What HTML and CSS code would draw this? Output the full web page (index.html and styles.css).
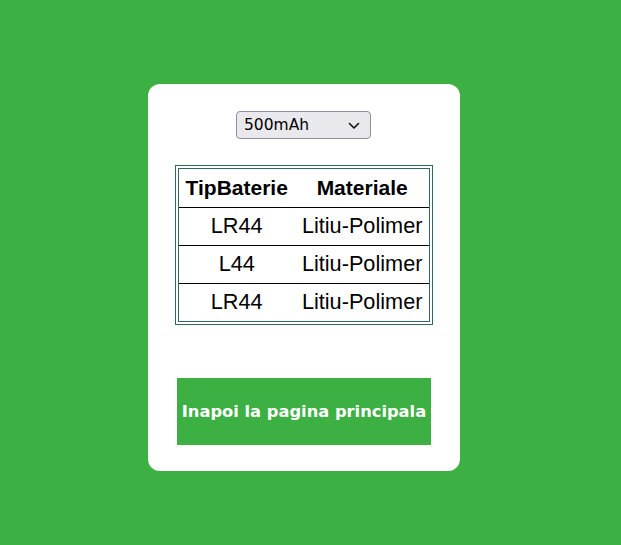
FILE: index.html
```html
<!DOCTYPE html>
<html lang="ro">
<head>
<meta charset="utf-8">
<title>Baterii</title>
<link rel="stylesheet" href="styles.css">
</head>
<body>
<div class="page">
  <div class="card">
    <div class="select-wrap">
      <select class="capacity">
        <option>500mAh</option>
        <option>1000mAh</option>
        <option>2000mAh</option>
      </select>
      <svg class="chevron" width="12" height="8" viewBox="0 0 12 8"><path d="M1.5 1.5 L6 6 L10.5 1.5" fill="none" stroke="#111" stroke-width="1.6" stroke-linecap="round" stroke-linejoin="round"/></svg>
    </div>
    <table class="batteries">
      <thead>
        <tr><th>TipBaterie</th><th>Materiale</th></tr>
      </thead>
      <tbody>
        <tr><td>LR44</td><td>Litiu-Polimer</td></tr>
        <tr><td>L44</td><td>Litiu-Polimer</td></tr>
        <tr><td>LR44</td><td>Litiu-Polimer</td></tr>
      </tbody>
    </table>
    <a class="back" href="#">Inapoi la pagina principala</a>
  </div>
</div>
</body>
</html>
```

FILE: styles.css
```css
html, body {
  margin: 0;
  padding: 0;
}
body {
  background: #3cb043;
  min-height: 545px;
}
.page {
  display: flex;
  justify-content: flex-start;
  padding: 84px 0 0 148px;
}
.card {
  box-sizing: border-box;
  width: 312px;
  height: 387px;
  background: #ffffff;
  border-radius: 12px;
  padding: 27px 0 0;
  display: flex;
  flex-direction: column;
  align-items: center;
}
.select-wrap {
  position: relative;
  width: 135px;
  height: 28px;
  margin-left: -1px;
}
.capacity {
  appearance: none;
  -webkit-appearance: none;
  box-sizing: border-box;
  width: 135px;
  height: 28px;
  margin: 0;
  padding: 0 0 0 7px;
  border: 1px solid #8f8f9d;
  border-radius: 4px;
  background: #e9e9ed;
  color: #000;
  font-family: "DejaVu Sans", "Open Sans", sans-serif;
  font-size: 15.5px;
  line-height: 26px;
}
.chevron {
  position: absolute;
  right: 11px;
  top: 11px;
  pointer-events: none;
}
.batteries {
  margin-top: 26px;
  border: 4px double #2f6a66;
  border-collapse: separate;
  border-spacing: 0;
  font-family: "Liberation Sans", Arial, sans-serif;
  line-height: 24px;
  color: #000;
}
.batteries th {
  padding: 7px 7px;
  font-size: 21px;
  font-weight: bold;
  text-align: center;
}
.batteries td {
  padding: 6px 7px 7px;
  font-size: 21.7px;
  border-top: 1px solid #000;
  text-align: center;
}
.back {
  box-sizing: border-box;
  margin-top: 53px;
  width: 254px;
  height: 67px;
  background: #3cb043;
  color: #ffffff;
  font-family: "DejaVu Sans", Verdana, sans-serif;
  font-weight: bold;
  font-size: 16.3px;
  text-decoration: none;
  display: flex;
  align-items: center;
  justify-content: center;
}
```
